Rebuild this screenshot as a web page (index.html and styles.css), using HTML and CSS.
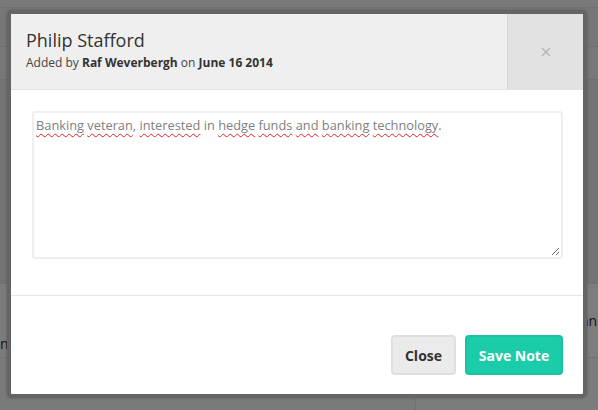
FILE: index.html
```html
<!DOCTYPE html>
<html>
<head>
<meta charset="utf-8">
<link rel="stylesheet" href="styles.css">
</head>
<body>
<div class="page">
  <div class="bg-strip"></div>
  <div class="bg-head"></div>
  <div class="bg-row"></div>
  <div class="bg-row bg-tall"></div>
  <div class="bg-cols">
    <div class="bg-col-left"><span class="bg-text-left">n</span></div>
    <div class="bg-col-right"><span class="bg-text-right">an</span></div>
  </div>
  <div class="bg-foot"><div class="bg-foot-left"></div><div class="bg-foot-right"></div></div>
</div>
<div class="overlay"></div>
<div class="modal">
  <div class="modal-header">
    <div class="heading">
      <h1 class="title">Philip Stafford</h1>
      <p class="meta">Added by <b>Raf Weverbergh</b> on <b>June 16 2014</b></p>
    </div>
    <div class="close-x">
      <svg width="10" height="10" viewBox="0 0 10 10"><path d="M1 1L9 9M9 1L1 9" stroke="#b8b8b8" stroke-width="1.6" fill="none"/></svg>
    </div>
  </div>
  <div class="modal-body">
    <div class="note">
      <span class="sp">Banking</span> <span class="sp">veteran</span>, <span class="sp">interested</span> in <span class="sp">hedge</span> <span class="sp">funds</span> <span class="sp">and</span> <span class="sp">banking</span> <span class="sp">technology</span>.
      <svg class="grip" width="9" height="9" viewBox="0 0 9 9"><path d="M8 1L1 8M8 5L5 8" stroke="#666" stroke-width="1" fill="none"/></svg>
    </div>
  </div>
  <div class="modal-footer">
    <button class="btn btn-close">Close</button>
    <button class="btn btn-save">Save Note</button>
  </div>
</div>
</body>
</html>
```

FILE: styles.css
```css
html, body {
  margin: 0;
  padding: 0;
}
body {
  width: 598px;
  height: 410px;
  overflow: hidden;
  position: relative;
  font-family: "Open Sans", "Liberation Sans", sans-serif;
  background: #fff;
}
.page {
  display: flex;
  flex-direction: column;
}
.bg-strip {
  height: 7px;
  background: #f4f4f4;
  border-bottom: 1px solid #e2e2e2;
}
.bg-head {
  height: 38px;
  background: #eeeeee;
  border-bottom: 1px solid #e0e0e0;
}
.bg-row {
  height: 32px;
  background: #f0f0f0;
  border-bottom: 1px solid #e0e0e0;
}
.bg-tall {
  height: 203px;
  background: #e6e6e6;
}
.bg-cols {
  display: flex;
  height: 73px;
  border-bottom: 1px solid #e4e4e4;
}
.bg-col-left {
  width: 415px;
  background: #f6f6f6;
  display: flex;
  align-items: flex-end;
  padding-bottom: 4px;
  box-sizing: border-box;
}
.bg-col-right {
  flex: 1;
  background: #fafafa;
  display: flex;
  align-items: center;
  justify-content: flex-end;
}
.bg-text-left {
  font-size: 14px;
  color: #2a2a3a;
  margin-left: 0;
}
.bg-text-right {
  font-size: 14px;
  color: #2a2a3a;
  margin-right: 1px;
}
.bg-foot {
  display: flex;
  height: 60px;
}
.bg-foot-left {
  width: 415px;
  background: #f4f4f4;
  border-right: 1px solid #e2e2e2;
}
.bg-foot-right {
  flex: 1;
  background: #f8f8f8;
}
.overlay {
  position: absolute;
  inset: 0;
  background: rgba(0, 0, 0, 0.5);
}
.modal {
  position: absolute;
  left: 7px;
  top: 10px;
  width: 572px;
  height: 380px;
  border: 4px solid #636666;
  border-radius: 5px;
  background: #fff;
  display: flex;
  flex-direction: column;
  box-shadow: 0 0 3px rgba(0, 0, 0, 0.25);
}
.modal-header {
  display: flex;
  height: 75px;
  background: #efefef;
  border-bottom: 1px solid #e2e2e2;
}
.heading {
  flex: 1;
  padding: 14px 15px 0;
}
.title {
  margin: 0;
  font-size: 18px;
  line-height: 24px;
  font-weight: 400;
  color: #333;
}
.meta {
  margin: 2px 0 0;
  font-size: 12px;
  line-height: 18px;
  color: #444;
}
.meta b {
  font-weight: 700;
  color: #333;
}
.close-x {
  width: 75px;
  background: #e2e2e2;
  border-left: 1px solid #d6d6d6;
  display: flex;
  align-items: center;
  justify-content: center;
}
.modal-body {
  padding: 21px 20px 36px 21px;
  border-bottom: 1px solid #e4e4e4;
}
.note {
  position: relative;
  height: 148px;
  box-sizing: border-box;
  border: 2px solid #efefef;
  border-radius: 3px;
  padding: 2px 2px;
  font-size: 12.8px;
  line-height: 20px;
  color: #808080;
}
.sp {
  text-decoration: underline wavy #e02020;
  text-decoration-thickness: 1px;
  text-underline-offset: 3px;
}
.grip {
  position: absolute;
  right: 1px;
  bottom: 1px;
}
.modal-footer {
  flex: 1;
  display: flex;
  justify-content: flex-end;
  align-items: flex-start;
  gap: 9px;
  padding: 39px 20px 0 0;
}
.btn {
  height: 40px;
  box-sizing: border-box;
  border-radius: 4px;
  border: 2px solid;
  font-family: "Open Sans", "Liberation Sans", sans-serif;
  font-size: 14px;
  font-weight: 700;
  cursor: pointer;
}
.btn-close {
  width: 65px;
  background: #ebebeb;
  border-color: #dfdfdf;
  color: #333;
}
.btn-save {
  width: 98px;
  background: #1acca9;
  border-color: #19c2a1;
  color: #fff;
}
```
